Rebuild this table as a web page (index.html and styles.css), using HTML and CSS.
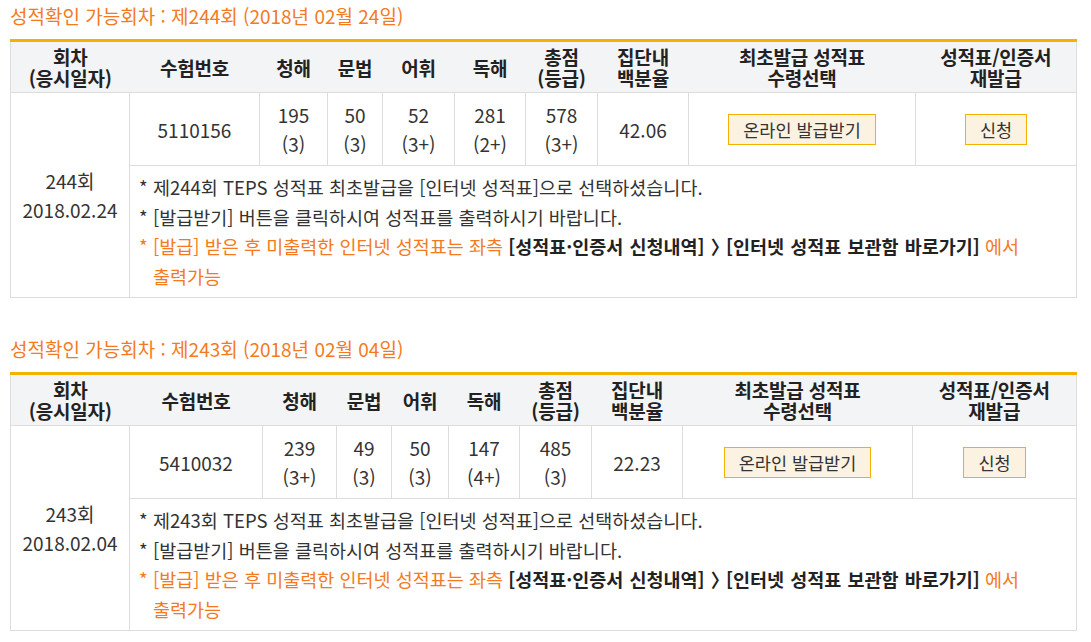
FILE: index.html
```html
<!DOCTYPE html>
<html lang="ko">
<head>
<meta charset="utf-8">
<title>성적확인</title>
<link rel="stylesheet" href="styles.css">
</head>
<body>
<section class="round">
  <h2 class="round-title">성적확인 가능회차 : 제244회 (2018년 02월 24일)</h2>
  <table class="score t1">
    <colgroup>
      <col class="c1"><col class="c2"><col class="c3"><col class="c4"><col class="c5"><col class="c6"><col class="c7"><col class="c8"><col class="c9"><col class="c10">
    </colgroup>
    <thead>
      <tr>
        <th>회차<br>(응시일자)</th>
        <th>수험번호</th>
        <th>청해</th>
        <th>문법</th>
        <th>어휘</th>
        <th>독해</th>
        <th>총점<br>(등급)</th>
        <th>집단내<br>백분율</th>
        <th>최초발급 성적표<br>수령선택</th>
        <th>성적표/인증서<br>재발급</th>
      </tr>
    </thead>
    <tbody>
      <tr class="data">
        <td rowspan="2" class="date">244회<br>2018.02.24</td>
        <td>5110156</td>
        <td>195<br>(3)</td>
        <td>50<br>(3)</td>
        <td>52<br>(3+)</td>
        <td>281<br>(2+)</td>
        <td>578<br>(3+)</td>
        <td>42.06</td>
        <td><button class="btn" type="button">온라인 발급받기</button></td>
        <td><button class="btn" type="button">신청</button></td>
      </tr>
      <tr>
        <td colspan="9" class="notes">
          <p class="note"><span class="star">*</span><span>제244회 TEPS 성적표 최초발급을 [인터넷 성적표]으로 선택하셨습니다.</span></p>
          <p class="note"><span class="star">*</span><span>[발급받기] 버튼을 클릭하시여 성적표를 출력하시기 바랍니다.</span></p>
          <p class="note warn"><span class="star">*</span><span><span class="nowrap">[발급] 받은 후 미출력한 인터넷 성적표는 좌측 <b>[성적표·인증서 신청내역] <span class="chev">〉</span>[인터넷 성적표 보관함 바로가기]</b> 에서</span><br>출력가능</span></p>
        </td>
      </tr>
    </tbody>
  </table>
</section>

<section class="round">
  <h2 class="round-title">성적확인 가능회차 : 제243회 (2018년 02월 04일)</h2>
  <table class="score t2">
    <colgroup>
      <col class="c1"><col class="c2"><col class="c3"><col class="c4"><col class="c5"><col class="c6"><col class="c7"><col class="c8"><col class="c9"><col class="c10">
    </colgroup>
    <thead>
      <tr>
        <th>회차<br>(응시일자)</th>
        <th>수험번호</th>
        <th>청해</th>
        <th>문법</th>
        <th>어휘</th>
        <th>독해</th>
        <th>총점<br>(등급)</th>
        <th>집단내<br>백분율</th>
        <th>최초발급 성적표<br>수령선택</th>
        <th>성적표/인증서<br>재발급</th>
      </tr>
    </thead>
    <tbody>
      <tr class="data">
        <td rowspan="2" class="date">243회<br>2018.02.04</td>
        <td>5410032</td>
        <td>239<br>(3+)</td>
        <td>49<br>(3)</td>
        <td>50<br>(3)</td>
        <td>147<br>(4+)</td>
        <td>485<br>(3)</td>
        <td>22.23</td>
        <td><button class="btn" type="button">온라인 발급받기</button></td>
        <td><button class="btn" type="button">신청</button></td>
      </tr>
      <tr>
        <td colspan="9" class="notes">
          <p class="note"><span class="star">*</span><span>제243회 TEPS 성적표 최초발급을 [인터넷 성적표]으로 선택하셨습니다.</span></p>
          <p class="note"><span class="star">*</span><span>[발급받기] 버튼을 클릭하시여 성적표를 출력하시기 바랍니다.</span></p>
          <p class="note warn"><span class="star">*</span><span><span class="nowrap">[발급] 받은 후 미출력한 인터넷 성적표는 좌측 <b>[성적표·인증서 신청내역] <span class="chev">〉</span>[인터넷 성적표 보관함 바로가기]</b> 에서</span><br>출력가능</span></p>
        </td>
      </tr>
    </tbody>
  </table>
</section>
</body>
</html>
```

FILE: styles.css
```css
* { box-sizing: border-box; }

html, body {
  margin: 0;
  background: #ffffff;
}

body {
  padding: 4px 0 0 10px;
  font-family: "Noto Sans CJK KR", "Noto Sans", sans-serif;
  color: #333333;
  font-size: 18px;
}

.round + .round {
  margin-top: 39px;
}

.round-title {
  margin: 0 0 11px;
  font-size: 19px;
  line-height: 24px;
  font-weight: 400;
  color: #f47a22;
}

.score {
  width: 1066px;
  table-layout: fixed;
  border-collapse: collapse;
  border: 1px solid #dddddd;
  border-top: 3px solid #f5b000;
}

.t1 .c1 { width: 119px; }
.t1 .c2 { width: 130px; }
.t1 .c3 { width: 68px; }
.t1 .c4 { width: 55px; }
.t1 .c5 { width: 72px; }
.t1 .c6 { width: 71px; }
.t1 .c7 { width: 72px; }
.t1 .c8 { width: 91px; }
.t1 .c9 { width: 227px; }
.t1 .c10 { width: 161px; }

.t2 .c1 { width: 119px; }
.t2 .c2 { width: 133px; }
.t2 .c3 { width: 74px; }
.t2 .c4 { width: 55px; }
.t2 .c5 { width: 57px; }
.t2 .c6 { width: 71px; }
.t2 .c7 { width: 72px; }
.t2 .c8 { width: 91px; }
.t2 .c9 { width: 230px; }
.t2 .c10 { width: 164px; }

.score th {
  background: #f3f4f6;
  color: #222222;
  font-size: 19px;
  font-weight: 700;
  line-height: 21px;
  padding: 4px 0 4px;
  height: 50px;
  border-bottom: 1px solid #dddddd;
  letter-spacing: -0.2px;
}

.score td {
  border: 1px solid #dddddd;
  text-align: center;
  vertical-align: middle;
  font-size: 19px;
  line-height: 29px;
  padding: 7px 0;
  color: #333333;
}

.btn {
  font-family: inherit;
  font-size: 17.5px;
  line-height: 27px;
  height: 31px;
  padding: 0 14px;
  color: #333333;
  background: #fbf2e2;
  border: 1px solid #f5b000;
  border-radius: 0;
  cursor: pointer;
}

.score td.notes {
  text-align: left;
  padding: 7px 8px 6px 9px;
}

.note {
  margin: 0;
  display: flex;
  font-size: 18.5px;
  line-height: 29.5px;
  color: #333333;
}

.star {
  flex: none;
  width: 14px;
}

.note.warn {
  color: #f47a22;
}

.note.warn b {
  color: #222222;
  font-weight: 700;
  word-spacing: 1px;
}

.nowrap {
  white-space: nowrap;
}

.chev {
  margin-right: calc(-0.45em + 5px);
}
```
